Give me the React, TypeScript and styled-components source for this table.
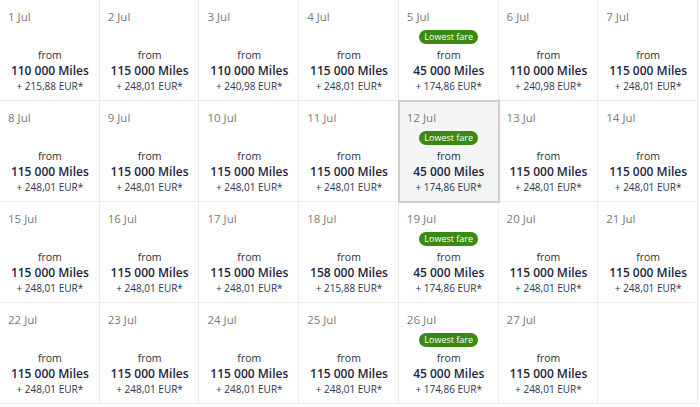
import React from "react";
import styled, { createGlobalStyle } from "styled-components";

const Global = createGlobalStyle`
  html, body { margin: 0; padding: 0; background: #fff; }
  body { font-family: "Open Sans", "Liberation Sans", sans-serif; }
`;

const Grid = styled.div`
  width: 698px;
  display: grid;
  grid-template-columns: repeat(7, 1fr);
  grid-auto-rows: 101px;
`;

const Cell = styled.div<{ $selected?: boolean }>`
  position: relative;
  box-sizing: border-box;
  display: flex;
  flex-direction: column;
  padding: 9px 7px 6px 8px;
  border-right: 1px solid #ececec;
  border-bottom: 1px solid #ececec;
  background: ${(p) => (p.$selected ? "#f4f6f6" : "#fff")};
  outline: ${(p) => (p.$selected ? "2px solid #cfcfcf" : "none")};
  outline-offset: -1px;
  z-index: ${(p) => (p.$selected ? 1 : 0)};
`;

const DateLabel = styled.div`
  font-size: 11.5px;
  line-height: 16px;
  color: #7a7a7a;
`;

const Body = styled.div`
  flex: 1;
  display: flex;
  flex-direction: column;
  align-items: center;
  justify-content: flex-end;
`;

const Badge = styled.div`
  background: #3a8a12;
  color: #fff;
  font-size: 9px;
  line-height: 14px;
  padding: 0 5px;
  border-radius: 8px;
  margin-bottom: 4px;
`;

const From = styled.div`
  font-size: 10.5px;
  line-height: 15px;
  color: #2b2f3a;
`;

const Miles = styled.div`
  font-size: 12px;
  font-weight: 600;
  line-height: 16px;
  color: #1c2540;
`;

const Eur = styled.div`
  font-size: 10px;
  line-height: 15px;
  color: #2b3550;
`;

type Day = { d: number; miles: string; eur: string; low?: boolean };

const days: Day[] = [
  { d: 1, miles: "110 000", eur: "215,88" },
  { d: 2, miles: "115 000", eur: "248,01" },
  { d: 3, miles: "110 000", eur: "240,98" },
  { d: 4, miles: "115 000", eur: "248,01" },
  { d: 5, miles: "45 000", eur: "174,86", low: true },
  { d: 6, miles: "110 000", eur: "240,98" },
  { d: 7, miles: "115 000", eur: "248,01" },
  { d: 8, miles: "115 000", eur: "248,01" },
  { d: 9, miles: "115 000", eur: "248,01" },
  { d: 10, miles: "115 000", eur: "248,01" },
  { d: 11, miles: "115 000", eur: "248,01" },
  { d: 12, miles: "45 000", eur: "174,86", low: true },
  { d: 13, miles: "115 000", eur: "248,01" },
  { d: 14, miles: "115 000", eur: "248,01" },
  { d: 15, miles: "115 000", eur: "248,01" },
  { d: 16, miles: "115 000", eur: "248,01" },
  { d: 17, miles: "115 000", eur: "248,01" },
  { d: 18, miles: "158 000", eur: "215,88" },
  { d: 19, miles: "45 000", eur: "174,86", low: true },
  { d: 20, miles: "115 000", eur: "248,01" },
  { d: 21, miles: "115 000", eur: "248,01" },
  { d: 22, miles: "115 000", eur: "248,01" },
  { d: 23, miles: "115 000", eur: "248,01" },
  { d: 24, miles: "115 000", eur: "248,01" },
  { d: 25, miles: "115 000", eur: "248,01" },
  { d: 26, miles: "45 000", eur: "174,86", low: true },
  { d: 27, miles: "115 000", eur: "248,01" },
];

export default function App() {
  return (
    <>
      <Global />
      <Grid>
        {days.map((day) => (
          <Cell key={day.d} $selected={day.d === 12}>
            <DateLabel>{day.d} Jul</DateLabel>
            <Body>
              {day.low && <Badge>Lowest fare</Badge>}
              <From>from</From>
              <Miles>{day.miles} Miles</Miles>
              <Eur>+ {day.eur} EUR*</Eur>
            </Body>
          </Cell>
        ))}
        <Cell />
      </Grid>
    </>
  );
}
